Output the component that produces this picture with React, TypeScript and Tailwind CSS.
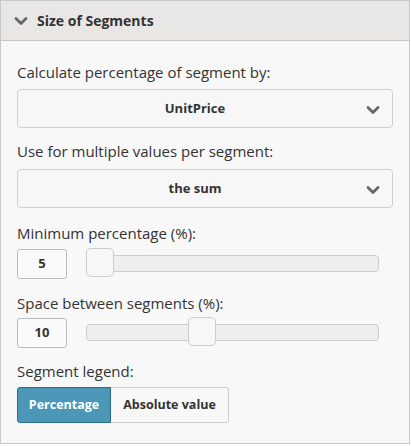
import React from 'react';

const font = { fontFamily: '"Segoe UI", "Open Sans", "Noto Sans", sans-serif' };

const Chevron: React.FC<{ className?: string }> = ({ className }) => (
  <svg viewBox="0 0 14 10" className={className} fill="none">
    <path d="M2 2.5 L7 7.5 L12 2.5" stroke="currentColor" strokeWidth="2.8" strokeLinecap="round" strokeLinejoin="round" />
  </svg>
);

const Select: React.FC<{ value: string }> = ({ value }) => (
  <div className="relative flex h-[39px] items-center justify-center rounded border border-[#cfcfcf] bg-[#f7f7f7] pr-[20px]">
    <span className="text-[13px] font-bold text-[#333]">{value}</span>
    <Chevron className="absolute right-[12px] top-[15px] h-[10px] w-[14px] text-[#666]" />
  </div>
);

const SliderRow: React.FC<{ value: string; pos: number }> = ({ value, pos }) => (
  <div className="flex items-center gap-[19px]">
    <div className="flex h-[30px] w-[50px] items-center justify-center rounded-[3px] border border-[#bbb] bg-[#fafafa] text-[13px] font-bold text-[#333]">
      {value}
    </div>
    <div className="relative h-[30px] w-[293px]">
      <div className="absolute left-0 right-0 top-[6px] h-[17px] rounded border border-[#ccc] bg-[#eee]" />
      <div
        className="absolute top-[-1px] h-[29px] w-[28px] rounded-[5px] border border-[#ccc] bg-[#f7f7f7]"
        style={{ left: pos }}
      />
    </div>
  </div>
);

const App: React.FC = () => {
  return (
    <div className="h-[446px] w-[411px] bg-white pr-[1px] pb-[2px]" style={font}>
      <div className="flex h-full flex-col border border-[#c8c8c8] bg-[#f8f8f8]">
        <div className="flex h-[40px] shrink-0 items-center gap-[9px] border-b border-[#c8c8c8] bg-[#e8e7e6] pl-[13px]">
          <Chevron className="h-[10px] w-[14px] text-[#666]" />
          <span className="text-[14px] font-bold text-[#333]">Size of Segments</span>
        </div>
        <div className="px-[16px] pt-[20px] text-[#333]">
          <p className="text-[15px] leading-[22px]">Calculate percentage of segment by:</p>
          <div className="mt-[6px]">
            <Select value="UnitPrice" />
          </div>
          <p className="mt-[12px] text-[15px] leading-[22px]">Use for multiple values per segment:</p>
          <div className="mt-[7px]">
            <Select value="the sum" />
          </div>
          <p className="mt-[14px] text-[15px] leading-[22px]">Minimum percentage (%):</p>
          <div className="mt-[5px]">
            <SliderRow value="5" pos={0} />
          </div>
          <p className="mt-[13px] text-[15px] leading-[22px]">Space between segments (%):</p>
          <div className="mt-[4px]">
            <SliderRow value="10" pos={102} />
          </div>
          <p className="mt-[12px] text-[15px] leading-[22px]">Segment legend:</p>
          <div className="mt-[5px] flex">
            <button className="h-[36px] w-[94px] rounded-l-[3px] border border-[#2e6b85] bg-[#4a97b7] text-[12.5px] font-bold text-white">
              Percentage
            </button>
            <button className="h-[36px] w-[118px] rounded-r-[3px] border border-l-0 border-[#ccc] bg-[#f8f8f8] text-[12.5px] font-bold text-[#333]">
              Absolute value
            </button>
          </div>
        </div>
      </div>
    </div>
  );
};

export default App;
